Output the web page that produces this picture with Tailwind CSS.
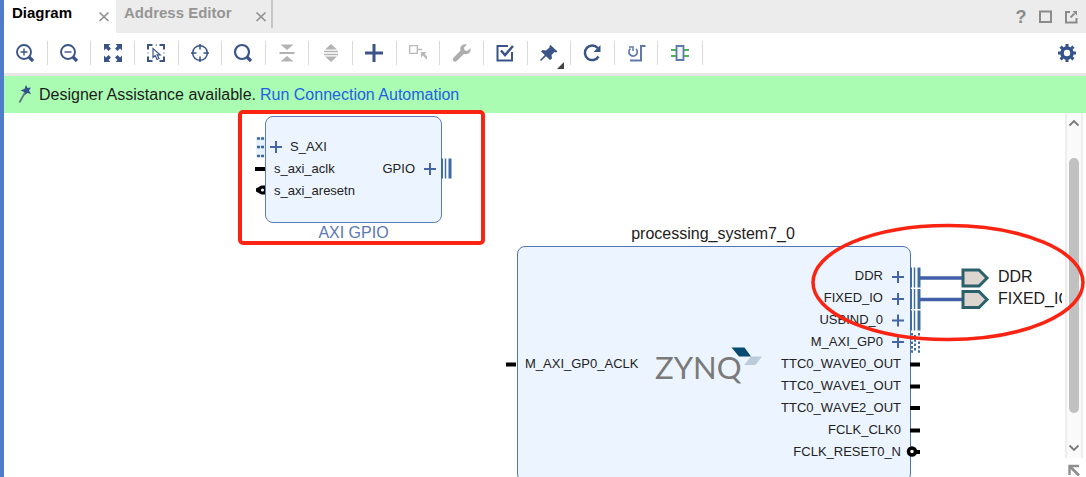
<!DOCTYPE html>
<html lang="en">
<head>
<meta charset="utf-8">
<title>Block Design</title>
<script src="https://cdn.jsdelivr.net/npm/@tailwindcss/browser@4"></script>
</head>
<body class="relative flex h-screen flex-col overflow-hidden border-l-4 border-[#4f7dcb] bg-white font-['Liberation_Sans',Arial,sans-serif] text-[#1c1c1c]">

<!-- Tabs -->
<header class="flex h-[33px] shrink-0 bg-[#ececec]">
  <nav class="flex flex-1" aria-label="Editors">
    <div class="flex w-[112px] items-start justify-between bg-white pl-2 pr-1.5">
      <a href="#diagram" class="pt-1 text-[15px] leading-[18px] font-bold text-black">Diagram</a>
      <button class="pt-[11px]" aria-label="Close Diagram"><svg width="12" height="12" viewBox="0 0 12 12" fill="none" stroke="#8f8f8f" stroke-width="1.7"><path d="M1.500 1.500l9 8.500M10.500 1.500l-9 8.500"/></svg></button>
    </div>
    <div class="flex h-7 w-[157px] items-start justify-between border-r-2 border-[#c6c6c6] pl-2 pr-1">
      <a href="#address" class="pt-1 text-[15px] leading-[18px] font-bold text-[#959595]">Address Editor</a>
      <button class="pt-[11px]" aria-label="Close Address Editor"><svg width="12" height="12" viewBox="0 0 12 12" fill="none" stroke="#8f8f8f" stroke-width="1.7"><path d="M1.500 1.500l9 8.500M10.500 1.500l-9 8.500"/></svg></button>
    </div>
  </nav>
  <div class="flex items-center gap-3 pr-2">
    <button class="w-3 text-[18px] leading-[18px] font-bold text-[#8a8a8a]" aria-label="Help">?</button>
    <button aria-label="Maximize"><svg width="13" height="13" viewBox="0 0 13 13" fill="none" stroke="#8a8a8a" stroke-width="2"><path d="M1 1.500h11v10.500H1z"/></svg></button>
    <button aria-label="Float"><svg width="14" height="14" viewBox="0 0 14 14" fill="none" stroke="#8a8a8a" stroke-width="2"><path d="M6 2H2v10.500h10.500V8"/><path d="M6.500 7.500l4-4" stroke-width="1.8"/><path d="M8.500 1H13v4.500z" fill="#8a8a8a" stroke="none"/></svg></button>
  </div>
</header>

<!-- Toolbar -->
<div class="flex h-[43px] shrink-0 items-center justify-between border-b-3 border-[#e7e7e7] pr-2" role="toolbar">
  <div class="grid w-[699px] grid-cols-16 divide-x divide-[#d9d9d9] border-r border-[#d9d9d9] text-[#3a5488] *:flex *:h-6 *:items-center *:justify-center">
    <button aria-label="Zoom in"><svg width="20" height="20" viewBox="0 0 20 20" fill="none" stroke="currentColor"><circle cx="9" cy="9" r="7" stroke-width="1.900"/><path d="M14 14l4 4" stroke-width="3.200"/><path d="M5.500 9h7M9 5.500v7" stroke-width="1.400"/></svg></button>
    <button aria-label="Zoom out"><svg width="20" height="20" viewBox="0 0 20 20" fill="none" stroke="currentColor"><circle cx="9" cy="9" r="7" stroke-width="1.900"/><path d="M14 14l4 4" stroke-width="3.200"/><path d="M5.500 9h7" stroke-width="1.400"/></svg></button>
    <button aria-label="Zoom fit"><svg width="20" height="20" viewBox="0 0 20 20" fill="currentColor"><path d="M1 1h6.500L5.500 3l2.500 2.500L5.500 8 3 5.500l-2 2zM19 1h-6.500l2 2L12 5.500 14.500 8 17 5.500l2 2zM1 19h6.500l-2-2L8 14.500 5.500 12 3 14.500l-2-2zM19 19h-6.500l2-2-2.500-2.500 2.500-2.500 2.500 2.500 2-2z"/></svg></button>
    <button aria-label="Zoom to selection"><svg width="20" height="20" viewBox="0 0 20 20" fill="none" stroke="currentColor"><path d="M2 6.500V2h4.500M13.500 2H18v4.500M18 13.500V18h-4.500M6.500 18H2v-4.500" stroke-width="2"/><path d="M7 5.500v9l2.200-2 1.800 4 2-1-1.800-3.700h3z" stroke-width="1.200"/><path d="M9.500 2h1.500M2 9.500v1M18 9.500v1"/></svg></button>
    <button aria-label="Center"><svg width="20" height="20" viewBox="0 0 20 20" fill="none" stroke="currentColor"><circle cx="10" cy="10" r="7.300" stroke-width="1.500"/><path d="M10 1v5.500M10 13.500V19M1 10h5.500M13.500 10H19" stroke-width="1.500"/></svg></button>
    <button aria-label="Search"><svg width="20" height="20" viewBox="0 0 20 20" fill="none" stroke="currentColor"><circle cx="9" cy="9" r="7" stroke-width="2.200"/><path d="M14 14l4 4" stroke-width="3.200"/></svg></button>
    <button aria-label="Collapse" class="text-[#b3b3b3]"><svg width="20" height="20" viewBox="0 0 20 20" fill="currentColor"><path d="M3.500 1.500h13L10 7zM3.500 18.500h13L10 13zM2.500 9h15v2h-15z"/></svg></button>
    <button aria-label="Expand" class="text-[#b3b3b3]"><svg width="20" height="20" viewBox="0 0 20 20" fill="currentColor"><path d="M4 6.500h12L10 1zM4 13.500h12L10 19zM3 7.800h14v1.500H3zM3 10.700h14v1.500H3z"/></svg></button>
    <button aria-label="Add IP"><svg width="20" height="20" viewBox="0 0 20 20" fill="none" stroke="currentColor" stroke-width="3"><path d="M10 1v18M1 10h18"/></svg></button>
    <button aria-label="Make external" class="text-[#b8b8b8]"><svg width="20" height="20" viewBox="0 0 20 20" fill="none" stroke="currentColor"><path d="M1.700 2.700h7.600v7.600H1.700z" stroke-width="1.300"/><path d="M10 6.500h4" stroke-width="1.500"/><path d="M13 9h5.500l-1.800 1.800 2.300 2.700V17l-4-4.500-2 2z" fill="currentColor" stroke="none"/></svg></button>
    <button aria-label="Customize" class="text-[#adadad]"><svg width="20" height="20" viewBox="0 0 20 20" fill="currentColor"><path d="M18.500 5.200l-3.300 2.700-2.600-.6-.7-2.500 3-3.200C12.500.6 9.900 1.500 8.800 3.600c-.7 1.400-.6 2.700-.2 3.900L1.500 14.800c-1 1-.9 2.300-.1 3.200.9.900 2.400.9 3.300 0l7.200-7c1.500.5 3.100.4 4.500-.5 1.900-1.200 2.600-3.300 2.100-5.300z"/></svg></button>
    <button aria-label="Validate"><svg width="20" height="20" viewBox="0 0 20 20" fill="none" stroke="currentColor"><path d="M13 3H2.500v14.500H17V9" stroke-width="2"/><path d="M6 7.500l4 4.500L18 3" stroke-width="2.500"/></svg></button>
    <button aria-label="Pin" class="relative"><svg width="20" height="20" viewBox="0 0 20 20" fill="currentColor"><path d="M11.500 2l7 6.500-1.500 1-1.500-.5-3 3 .5 3.500L11 17l-4-3.800L2 18l-1-1 4.800-5L2 8.500 3.500 7l3.500.5 3.500-3V3z"/></svg><svg class="absolute right-1.5 -bottom-1" width="7" height="7" viewBox="0 0 7 7" fill="#444"><path d="M7 0v7H0z"/></svg></button>
    <button aria-label="Regenerate"><svg width="20" height="20" viewBox="0 0 20 20" fill="none" stroke="currentColor"><path d="M16.500 13.500a7.300 7.300 0 1 1-.8-8.500" stroke-width="2.500"/><path d="M18.500 2v7h-7z" fill="currentColor" stroke="none"/></svg></button>
    <button aria-label="Regenerate layout"><svg width="20" height="20" viewBox="0 0 20 20" fill="none" stroke="#6079a8"><path d="M19.500 3h-4.500v14.500H4" stroke-width="2"/><path d="M10 5.800a4.200 4.200 0 1 1-5.500-.2" stroke-width="1.700"/><path d="M3 4h4v4" stroke-width="1.500"/></svg></button>
    <button aria-label="Interfaces view"><svg width="20" height="20" viewBox="0 0 20 20" fill="none"><path d="M1 7h5M1 13h5M14 7h5M14 13h5" stroke="#4db552" stroke-width="2"/><path d="M6.500 3h7v14h-7z" stroke="#6079a8" stroke-width="1.800" fill="#f3f7fb"/></svg></button>
  </div>
  <button aria-label="Settings"><svg width="22" height="20" viewBox="-11 -10 22 20" fill="none" stroke="#33528c"><circle r="5" stroke-width="3.600"/><path d="M0-6v-3M0 6v3M-6 0h-3M6 0h3M-4.400-4.400l-2-2M4.400-4.400l2-2M-4.400 4.400l-2 2M4.400 4.400l2 2" stroke-width="3"/></svg></button>
</div>

<!-- Assistance banner -->
<div class="flex h-[37px] shrink-0 items-center bg-[#abfcb3] pl-3.5 text-base">
  <svg class="mr-1.5" width="15" height="19" viewBox="0 0 15 19"><path d="M8 0l1.500 3L13 2.500l-2 3L13 9l-3.700-1L6.500 10.500 6 7 2.500 5.200 6.500 4z" fill="#34508a"/><path d="M7 7.500L1.500 17.500" stroke="#5b7a86" stroke-width="1.800"/></svg>
  <span class="mr-1">Designer Assistance available.</span>
  <a href="#run" class="text-[#2160e8]">Run Connection Automation</a>
</div>

<!-- Diagram canvas -->
<main class="flex min-h-0 flex-1">
  <div class="relative mr-[3px] flex-1 overflow-hidden text-[13px] leading-[22px] text-[#222] [font-kerning:none]">
    <section class="absolute top-[3px] left-[261px] flex h-[107px] w-[177px] justify-between rounded-lg border border-[#5b7dbb] bg-[#ecf5ff] pt-[19px] pl-2">
      <ul>
        <li class="pl-4">S_AXI</li>
        <li>s_axi_aclk</li>
        <li>s_axi_aresetn</li>
      </ul>
      <ul class="pt-[22px] pr-[26px]"><li>GPIO</li></ul>
    </section>
    <h2 class="absolute top-[108px] left-[261px] w-[177px] text-center text-base text-[#5a78b4]">AXI GPIO</h2>

    <h2 class="absolute top-[109px] left-[513px] w-[392px] text-center text-base">processing_system7_0</h2>
    <section class="absolute top-[133px] left-[513px] flex h-[236px] w-[394px] justify-between rounded-lg border border-[#4f74b4] bg-[#ecf5ff] pt-[18px] pr-[9px] pl-[7px]">
      <ul class="pt-[88px]"><li>M_AXI_GP0_ACLK</li></ul>
      <ul class="text-right">
        <li class="pr-[18px]">DDR</li>
        <li class="pr-[18px]">FIXED_IO</li>
        <li class="pr-[18px]">USBIND_0</li>
        <li class="pr-[18px]">M_AXI_GP0</li>
        <li>TTC0_WAVE0_OUT</li>
        <li>TTC0_WAVE1_OUT</li>
        <li>TTC0_WAVE2_OUT</li>
        <li>FCLK_CLK0</li>
        <li>FCLK_RESET0_N</li>
      </ul>
    </section>
    <div class="absolute top-[234px] left-[651px] font-[Lato,sans-serif] text-[31px] leading-10 text-[#7a7a7a]">ZYNQ</div>
    <div class="absolute top-[153px] left-[994px] text-base leading-[22px] text-[#1c1c1c]">
      <p>DDR</p>
      <p>FIXED_IO</p>
    </div>

    <!-- Pins, wires and external ports -->
    <svg class="absolute inset-0 h-full w-full" fill="none">
      <defs>
        <path id="plus" d="M-6 0H6M0-6V6" stroke="#4565a5" stroke-width="2"/>
        <g id="bus" stroke="#3f6ca5"><path d="M2-10V10" stroke-width="2"/><path d="M5.500-10V10" stroke-width="1.500"/><path d="M10-10V10" stroke-width="3"/></g>
        <path id="pin" d="M0 0H10" stroke="#000" stroke-width="4"/>
        <path id="port" d="M0-8H16L24 0 16 8H0z" fill="#ddd5cf" stroke="#2a5f6c" stroke-width="3"/>
      </defs>
      <g transform="translate(-4 -113)">
        <path d="M256 137h9v20h-9z" fill="#e6f2fd"/>
        <path d="M257 138.500h8M257 147h8M257 156h8" stroke="#3a68a6" stroke-width="2.500" stroke-dasharray="3 1"/>
        <use href="#plus" x="276" y="147"/>
        <use href="#pin" x="255" y="169"/>
        <path d="M265 185.500h-3.500l-5.500 3v3l5.500 3h3.500z" fill="#000"/>
        <circle cx="262.500" cy="190" r="1.500" fill="#fff"/>
        <use href="#plus" x="430" y="169"/>
        <use href="#bus" x="440" y="168.500"/>

        <use href="#plus" x="898" y="277"/>
        <use href="#plus" x="898" y="299"/>
        <use href="#plus" x="898" y="320.500"/>
        <use href="#plus" x="898" y="342"/>
        <use href="#bus" x="909" y="277.500"/>
        <use href="#bus" x="909" y="299"/>
        <use href="#bus" x="909" y="320.500"/>
        <path d="M912 333v20M915 335v16M919 333v20" stroke="#3f6ca5" stroke-width="2" stroke-dasharray="2.500 1.800"/>
        <path d="M920 278h42M920 299.500h42" stroke="#4260a8" stroke-width="3.500"/>
        <use href="#port" x="963" y="278"/>
        <use href="#port" x="963" y="299.500"/>
        <use href="#pin" x="506" y="364.500"/>
        <use href="#pin" x="910" y="364.500"/>
        <use href="#pin" x="910" y="386.500"/>
        <use href="#pin" x="910" y="408"/>
        <use href="#pin" x="910" y="430.500"/>
        <circle cx="912" cy="451.500" r="3.500" fill="#fff" stroke="#000" stroke-width="3.500"/><path d="M915 452h5" stroke="#000" stroke-width="4"/>
        <path d="M731.500 347.500h13l6.500 9h-12z" fill="#064a72"/>
        <path d="M744 365l7-8.500h11l-6.500 8.500z" fill="#bccbd9"/>
      </g>
    </svg>
  </div>

  <aside class="mr-[3px] flex w-[18px] flex-col" aria-label="Scroll">
    <div class="flex min-h-0 flex-1 flex-col items-center border-x-2 border-[#ededed] bg-[#fafafa]">
      <button class="py-1.5" aria-label="Scroll up"><svg width="12" height="8" viewBox="0 0 12 8" fill="none" stroke="#7a7a7a" stroke-width="1.800"><path d="M1.500 6.500L6 2l4.500 4.500"/></svg></button>
      <div class="mt-[25px] mb-[25px] w-2.5 flex-1 rounded-full bg-[#c1c1c1]"></div>
      <button class="py-1.5" aria-label="Scroll down"><svg width="12" height="8" viewBox="0 0 12 8" fill="none" stroke="#7a7a7a" stroke-width="1.800"><path d="M1.500 1.500L6 6l4.500-4.500"/></svg></button>
    </div>
    <button class="flex h-[19px] items-end justify-center" aria-label="Overview"><svg width="12" height="13" viewBox="0 0 12 13" fill="none" stroke="#8f8f8f"><path d="M1.500 11V2H11" stroke-width="2.400"/><path d="M2.500 3l8.500 8.500" stroke-width="2.800"/></svg></button>
  </aside>
</main>

<!-- Highlight marks -->
<svg class="pointer-events-none absolute inset-0 h-full w-full" fill="none" stroke="#fb2413">
  <rect x="236" y="112" width="243" height="131" rx="3" stroke-width="4"/>
  <ellipse cx="944" cy="282.500" rx="135" ry="57" stroke-width="3.500"/>
</svg>
</body>
</html>
